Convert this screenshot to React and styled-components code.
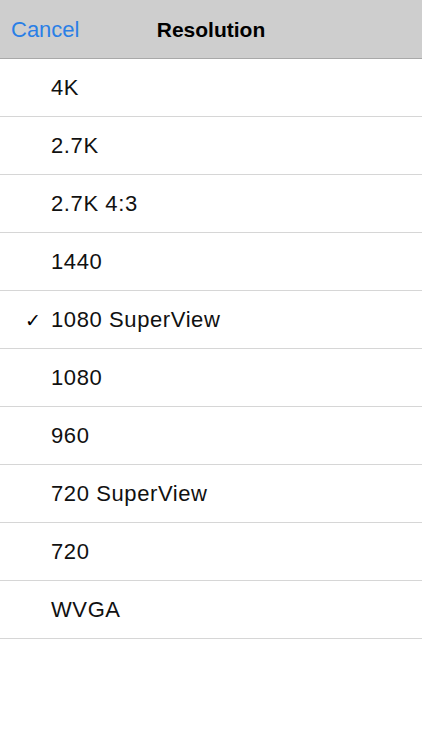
import React from "react";
import styled, { createGlobalStyle } from "styled-components";

const GlobalStyle = createGlobalStyle`
  html, body {
    margin: 0;
    padding: 0;
    background: #ffffff;
  }
  body {
    font-family: "Liberation Sans", Arial, sans-serif;
    -webkit-font-smoothing: antialiased;
  }
`;

const options = [
  "4K",
  "2.7K",
  "2.7K 4:3",
  "1440",
  "1080 SuperView",
  "1080",
  "960",
  "720 SuperView",
  "720",
  "WVGA",
];

export default function App() {
  const selected = "1080 SuperView";
  return (
    <Screen>
      <GlobalStyle />
      <NavBar>
        <CancelButton>Cancel</CancelButton>
        <Title>Resolution</Title>
      </NavBar>
      <List>
        {options.map((opt) => (
          <Row key={opt}>
            <Check>{opt === selected ? "✓" : ""}</Check>
            <Label>{opt}</Label>
          </Row>
        ))}
      </List>
    </Screen>
  );
}

const Screen = styled.div`
  width: 422px;
  min-height: 750px;
  background: #ffffff;
`;

const NavBar = styled.div`
  position: relative;
  height: 59px;
  padding-top: 2px;
  box-sizing: border-box;
  background: #cecece;
  border-bottom: 1px solid #a9a9a9;
  display: flex;
  align-items: center;
  justify-content: center;
`;

const CancelButton = styled.button`
  position: absolute;
  left: 11px;
  top: 2px;
  bottom: 0;
  padding: 0;
  border: none;
  background: none;
  font-family: inherit;
  font-size: 22px;
  color: #2a7fe6;
`;

const Title = styled.div`
  font-size: 21px;
  font-weight: bold;
  color: #000000;
`;

const List = styled.div`
  display: flex;
  flex-direction: column;
`;

const Row = styled.div`
  height: 58px;
  padding-top: 1px;
  box-sizing: border-box;
  border-bottom: 1px solid #d6d6d6;
  display: flex;
  align-items: center;
`;

const Check = styled.span`
  width: 51px;
  padding-left: 25px;
  box-sizing: border-box;
  font-family: "DejaVu Sans", sans-serif;
  font-size: 19px;
  color: #000000;
`;

const Label = styled.span`
  font-size: 22px;
  letter-spacing: 0.6px;
  color: #111111;
`;
